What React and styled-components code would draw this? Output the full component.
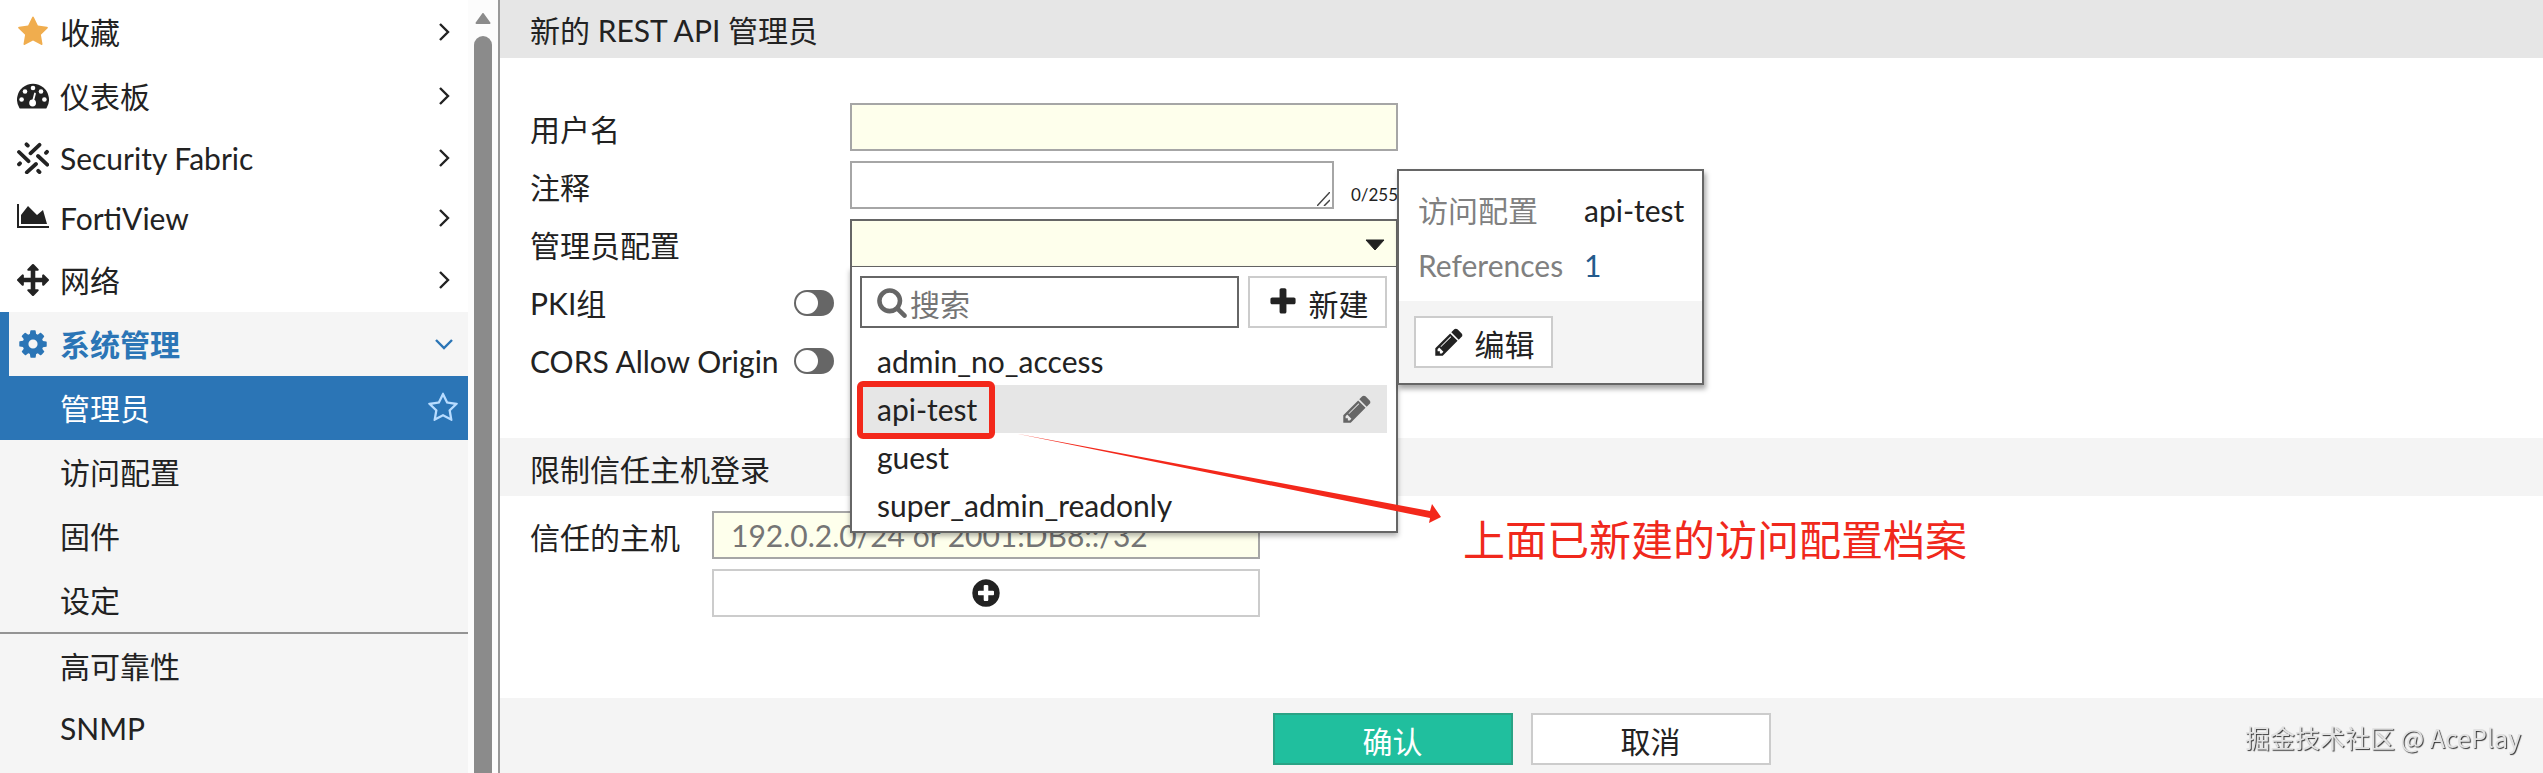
import React from "react";
import styled, { createGlobalStyle, css } from "styled-components";

const GlobalStyle = createGlobalStyle`
  *, *::before, *::after { box-sizing: border-box; }
  body {
    margin: 0;
    background: #fff;
    color: #222;
    font: 30px/40px Lato, "Noto Sans CJK SC", sans-serif;
  }
  button, input, select, textarea { font: inherit; color: inherit; margin: 0; }
  a { color: inherit; text-decoration: none; }
  ul { list-style: none; margin: 0; padding: 0; }
  svg { display: block; flex: none; }
`;

/* ---------- icons ---------- */

const Glyph = ({ d, size = 32, box = "0 0 1792 1792" }) => (
  <svg width={size} height={size} viewBox={box} fill="currentColor" aria-hidden="true">
    <path d={d} />
  </svg>
);

const STAR =
  "M1728 647q0 22-26 48l-363 354 86 500q1 7 1 20 0 21-10.5 35.5t-30.5 14.5q-19 0-40-12l-449-236-449 236q-22 12-40 12-21 0-31.5-14.5t-10.5-35.5q0-6 2-20l86-500-364-354q-25-27-25-48 0-37 56-46l502-73 225-455q19-41 49-41t49 41l225 455 502 73q56 9 56 46z";
const STAR_OUTLINE =
  "M1201 1004l306-297-422-62-189-382-189 382-422 62 306 297-73 421 378-199 377 199zm527-357q0 22-26 48l-363 354 86 500q1 7 1 20 0 50-41 50-19 0-40-12l-449-236-449 236q-22 12-40 12-21 0-31.5-14.5t-10.5-35.5q0-6 2-20l86-500-364-354q-25-27-25-48 0-37 56-46l502-73 225-455q19-41 49-41t49 41l225 455 502 73q56 9 56 46z";
const GEAR =
  "M1152 896q0-106-75-181t-181-75-181 75-75 181 75 181 181 75 181-75 75-181zm512-109v222q0 12-8 23t-20 13l-185 28q-19 54-39 91 35 50 107 138 10 12 10 25t-9 23q-27 37-99 108t-94 71q-12 0-26-9l-138-108q-44 23-91 38-16 136-29 186-7 28-36 28h-222q-14 0-24.5-8.5t-11.5-21.5l-28-184q-49-16-90-37l-141 107q-10 9-25 9-14 0-25-11-126-114-165-168-7-10-7-23 0-12 8-23 15-21 51-66.5t54-70.5q-27-50-41-99l-183-27q-13-2-21-12.5t-8-23.5v-222q0-12 8-23t19-13l186-28q14-46 39-92-40-57-107-138-10-12-10-24 0-10 9-23 26-36 98.5-107.5t94.5-71.5q13 0 26 10l138 107q44-23 91-38 16-136 29-186 7-28 36-28h222q14 0 24.5 8.5t11.5 21.5l28 184q49 16 90 37l142-107q9-9 24-9 13 0 25 10 129 119 165 170 7 8 7 22 0 12-8 23-15 21-51 66.5t-54 70.5q26 50 41 98l183 28q13 2 21 12.5t8 23.5z";
const ARROWS =
  "M1792 896q0 26-19 45l-256 256q-19 19-45 19t-45-19-19-45v-128h-384v384h128q26 0 45 19t19 45-19 45l-256 256q-19 19-45 19t-45-19l-256-256q-19-19-19-45t19-45 45-19h128v-384h-384v128q0 26-19 45t-45 19-45-19l-256-256q-19-19-19-45t19-45l256-256q19-19 45-19t45 19 19 45v128h384v-384h-128q-26 0-45-19t-19-45 19-45l256-256q19-19 45-19t45 19l256 256q19 19 19 45t-19 45-45 19h-128v384h384v-128q0-26 19-45t45-19 45 19l256 256q19 19 19 45z";
const AREA = "M2048 1536v128h-2048v-1536h128v1408h1920zm-384-1024l256 896h-1664v-576l448-576 576 576z";
const PENCIL =
  "M491 1536l91-91-235-235-91 91v107h128v128h107zm523-928q0-22-22-22-10 0-17 7l-542 542q-7 7-7 17 0 22 22 22 10 0 17-7l542-542q7-7 7-17zm-54-192l416 416-832 832h-416v-416zm683 96q0 53-37 90l-166 166-416-416 166-165q36-38 90-38 53 0 91 38l235 234q37 39 37 91z";
const SEARCH =
  "M1216 832q0-185-131.5-316.5t-316.5-131.5-316.5 131.5-131.5 316.5 131.5 316.5 316.5 131.5 316.5-131.5 131.5-316.5zm512 832q0 52-38 90t-90 38q-54 0-90-38l-343-342q-179 124-399 124-143 0-273.5-55.5t-225-150-150-225-55.5-273.5 55.5-273.5 150-225 225-150 273.5-55.5 273.5 55.5 225 150 150 225 55.5 273.5q0 220-124 399l343 343q37 37 37 90z";
const PLUS =
  "M1600 736v192q0 40-28 68t-68 28h-416v416q0 40-28 68t-68 28h-192q-40 0-68-28t-28-68v-416h-416q-40 0-68-28t-28-68v-192q0-40 28-68t68-28h416v-416q0-40 28-68t68-28h192q40 0 68 28t28 68v416h416q40 0 68 28t28 68z";
const PLUS_CIRCLE =
  "M1344 960v-128q0-26-19-45t-45-19h-256v-256q0-26-19-45t-45-19h-128q-26 0-45 19t-19 45v256h-256q-26 0-45 19t-19 45v128q0 26 19 45t45 19h256v256q0 26 19 45t45 19h128q26 0 45-19t19-45v-256h256q26 0 45-19t19-45zm320-64q0 209-103 385.5t-279.5 279.5-385.5 103-385.5-103-279.5-279.5-103-385.5 103-385.5 279.5-279.5 385.5-103 385.5 103 279.5 279.5 103 385.5z";

const DashboardIcon = () => (
  <svg width="32" height="32" viewBox="0 0 32 32" aria-hidden="true">
    <path d="M3.4 28.6a1.2 1.2 0 0 1-1-.5A16 16 0 1 1 29.600 28.100a1.200 1.200 0 0 1-1 .5z" fill="currentColor" />
    <g fill="#fff">
      <circle cx="4.600" cy="19.500" r="2.300" />
      <circle cx="8" cy="11.500" r="2.300" />
      <circle cx="16" cy="8" r="2.300" />
      <circle cx="24" cy="11.500" r="2.300" />
      <circle cx="27.400" cy="19.500" r="2.300" />
      <circle cx="15.600" cy="23" r="3.400" />
    </g>
    <path d="M15.800 22L18 13.500" stroke="#fff" strokeWidth="1.800" strokeLinecap="round" />
  </svg>
);

const FabricIcon = () => (
  <svg width="32" height="32" viewBox="0 0 32 32" fill="none" stroke="currentColor" strokeWidth="3.800" strokeLinecap="round" aria-hidden="true">
    <path d="M9.500 2.300l1.300 1.300M22.500 2.800l-9 8.500M2 10l9.500 9.200M30 9.800l-1 1M21 14l9.200 8.700M19 22l-9.200 8.300M3 21.300l-1 1M21.200 28.800l1.300 1.300" />
  </svg>
);

const Chevron = ({ down }) => (
  <svg width="20" height="20" viewBox="0 0 20 20" fill="none" stroke="currentColor" strokeWidth="2.400" aria-hidden="true">
    <path d={down ? "M2 6l8 8 8-8" : "M6 2l8 8-8 8"} />
  </svg>
);

/* ---------- shell ---------- */

const Page = styled.div`
  display: flex;
  height: 100vh;
  min-height: 700px;
  overflow: hidden;
`;

const Sidebar = styled.aside`
  display: flex;
  flex: none;
  width: 500px;
  border-right: 2px solid #999;
`;

const Menu = styled.nav`
  display: flex;
  flex-direction: column;
  width: 468px;
`;

const MenuRow = styled.a`
  display: flex;
  flex: none;
  align-items: center;
  height: ${(p) => (p.$compact ? 60 : 64)}px;
  padding: 0 14px 0 17px;
  gap: 11px;

  span { flex: 1; }

  ${(p) =>
    p.$open &&
    css`
      padding-left: 8px;
      border-left: 9px solid #2b75b6;
      background: #f5f5f5;
      color: #2b75b6;
      font-weight: 700;
    `}
`;

const StarTint = styled.i`
  color: #f0ad4e;
`;

const SubMenu = styled.div`
  display: flex;
  flex: 1;
  flex-direction: column;
  background: #f5f5f5;
`;

const SubRow = styled(MenuRow)`
  padding: 0 9px 0 60px;
  ${(p) =>
    p.$selected &&
    css`
      background: #2b75b6;
      color: #fff;
      svg { color: #b8dcff; }
    `}
`;

const Divider = styled.hr`
  flex: none;
  width: 100%;
  margin: 0;
  border: 0;
  border-top: 2px solid #949494;
`;

const ScrollTrack = styled.div`
  display: flex;
  flex: 1;
  flex-direction: column;
  align-items: center;
  padding-top: 13px;
  gap: 12px;
  background: #fcfcfc;
`;

const ScrollThumb = styled.div`
  flex: 1;
  width: 18px;
  border-radius: 9px 9px 0 0;
  background: #8b8b8b;
`;

const Main = styled.main`
  display: flex;
  flex: 1;
  flex-direction: column;
  min-width: 0;
`;

const TitleBar = styled.h1`
  height: 58px;
  margin: 0;
  padding: 10px 30px;
  background: #e6e6e6;
  font: inherit;
`;

const Form = styled.form`
  display: flex;
  flex: 1;
  flex-direction: column;
`;

const Fields = styled.div`
  display: flex;
  flex-direction: column;
  gap: 10px;
  padding: ${(p) => (p.$top ? "45px 30px 55px" : "15px 30px")};
`;

const Field = styled.div`
  display: grid;
  grid-template-columns: ${(p) => (p.$narrow ? "182px" : "320px")} 548px;
  align-items: center;
  min-height: 48px;
`;

const FieldLabel = styled.div`
  display: flex;
  align-items: center;
  justify-content: space-between;
  padding: 4px 16px 0 0;
`;

const boxed = css`
  width: 100%;
  height: 48px;
  border: 2px solid #a6a6a6;
  border-radius: 0;
  background: ${(p) => (p.$required ? "#feffec" : "#fff")};
  outline: none;
`;

const TextInput = styled.input`
  ${boxed}
  padding: 0 17px;
  &::placeholder { color: #757575; opacity: 1; }
`;

const CommentBox = styled.div`
  display: flex;
  align-items: flex-end;
  justify-content: space-between;
`;

const Resizable = styled.div`
  position: relative;
  width: 484px;
  height: 48px;
  svg {
    position: absolute;
    right: 4px;
    bottom: 3px;
  }
`;

const TextArea = styled.textarea`
  ${boxed}
  display: block;
  resize: none;
`;

const Counter = styled.span`
  font-size: 17px;
  line-height: 28px;
`;

const Toggle = styled.input.attrs({ type: "checkbox" })`
  appearance: none;
  width: 40px;
  height: 26px;
  padding: 2px;
  border-radius: 13px;
  background: #666;
  &::before {
    content: "";
    display: block;
    width: 22px;
    height: 22px;
    border-radius: 50%;
    background: #fff;
  }
  &:checked::before { margin-left: auto; }
`;

const SectionTitle = styled.h2`
  height: 58px;
  margin: 0;
  padding: 11px 30px 7px;
  background: #f4f4f4;
  font: inherit;
`;

const Button = styled.button`
  display: flex;
  flex: none;
  align-items: center;
  justify-content: center;
  gap: 10px;
  width: ${(p) => p.$width || "100%"};
  height: ${(p) => p.$height || 52}px;
  padding: 0;
  border: 2px solid #ccc;
  background: #fff;
  white-space: nowrap;
  ${(p) =>
    p.$primary &&
    css`
      border-color: #2aa385;
      background: #20bf9e;
      color: #fff;
    `}
  span { padding-top: 3px; }
`;

const Footer = styled.footer`
  display: flex;
  justify-content: center;
  gap: 18px;
  margin-top: auto;
  padding: 15px 0 8px;
  background: #f4f4f4;
`;

/* ---------- profile drop-down ---------- */

const Combo = styled.div`
  position: relative;
  z-index: 1;
  height: 48px;
`;

const ProfileSelect = styled.select`
  ${boxed}
  appearance: none;
  border: 2px solid #666;
  border-bottom-width: 1px;
`;

const Caret = styled.svg`
  position: absolute;
  top: 20px;
  right: 13px;
  pointer-events: none;
`;

const Panel = styled.div`
  position: absolute;
  top: 48px;
  left: 0;
  width: 100%;
  padding: 9px 9px 2px 8px;
  border: 2px solid #666;
  border-top: 0;
  background: #fff;
  box-shadow: 0 3px 5px rgba(0, 0, 0, 0.3);
`;

const Tools = styled.div`
  display: flex;
  gap: 9px;
  margin-bottom: 9px;
`;

const SearchBox = styled.label`
  display: flex;
  flex: 1;
  min-width: 0;
  align-items: center;
  gap: 2px;
  height: 52px;
  padding-left: 14px;
  border: 2px solid #666;
  color: #666;
  input {
    flex: 1;
    min-width: 0;
    height: 44px;
    padding: 4px 0 0;
    border: 0;
    outline: 0;
    background: transparent;
  }
  input::placeholder { color: #757575; opacity: 1; }
`;

const Option = styled.li`
  position: relative;
  display: flex;
  align-items: center;
  justify-content: space-between;
  height: 48px;
  padding: 0 14px 0 17px;
  background: ${(p) => (p.$active ? "#e6e6e6" : "transparent")};
  svg { color: #666; }
`;

const RedFrame = styled.span`
  position: absolute;
  top: -4px;
  left: -3px;
  width: 138px;
  height: 58px;
  border: 6px solid #f3281b;
  border-radius: 6px;
`;

const Popover = styled.div`
  position: absolute;
  top: -50px;
  left: 547px;
  width: 307px;
  border: 2px solid #666;
  background: #fff;
  box-shadow: 2px 4px 5px rgba(0, 0, 0, 0.35);
`;

const Facts = styled.dl`
  display: grid;
  grid-template-columns: 166px auto;
  row-gap: 15px;
  margin: 0;
  padding: 19px 0 16px 19px;
  dt { color: #808080; }
  dd { margin: 0; }
  a { color: #235a8c; }
`;

const PopoverActions = styled.div`
  padding: 15px;
  background: #f4f4f4;
`;

const Pointer = styled.svg`
  position: absolute;
  top: 212px;
  left: 162px;
  pointer-events: none;
`;

const Note = styled.p`
  position: absolute;
  top: 291px;
  left: 613px;
  margin: 0;
  color: #f0281c;
  font-size: 42px;
  line-height: 60px;
  white-space: nowrap;
`;

const Watermark = styled.div`
  position: fixed;
  right: 22px;
  bottom: 16px;
  color: #e2e2e2;
  font: 25px/40px "Noto Sans CJK SC", sans-serif;
  text-shadow: 1px 1px 1px #333;
`;

const sections = [
  { text: "收藏", icon: <StarTint><Glyph d={STAR} /></StarTint> },
  { text: "仪表板", icon: <DashboardIcon /> },
  { text: "Security Fabric", icon: <FabricIcon />, compact: true },
  { text: "FortiView", icon: <Glyph d={AREA} box="0 0 2048 2048" />, compact: true },
  { text: "网络", icon: <Glyph d={ARROWS} /> },
  { text: "系统管理", icon: <Glyph d={GEAR} />, open: true },
];

const profiles = ["admin_no_access", "api-test", "guest", "super_admin_readonly"];

function ProfilePicker() {
  return (
    <Combo>
      <ProfileSelect id="profile" $required defaultValue="">
        <option value="" />
        {profiles.map((name) => <option key={name}>{name}</option>)}
      </ProfileSelect>
      <Caret width="20" height="12" viewBox="0 0 20 12" aria-hidden="true">
        <path d="M1 1h18l-9 10z" fill="#222" stroke="#222" strokeLinejoin="round" />
      </Caret>
      <Panel>
        <Tools>
          <SearchBox>
            <Glyph d={SEARCH} />
            <input type="text" placeholder="搜索" aria-label="搜索" />
          </SearchBox>
          <Button type="button" $width="139px">
            <Glyph d={PLUS} />
            <span>新建</span>
          </Button>
        </Tools>
        <ul>
          {profiles.map((name) => {
            const active = name === "api-test";
            return (
              <Option key={name} $active={active}>
                {name}
                {active && <Glyph d={PENCIL} />}
                {active && <RedFrame />}
              </Option>
            );
          })}
        </ul>
      </Panel>
      <Popover>
        <Facts>
          <dt>访问配置</dt>
          <dd>api-test</dd>
          <dt>References</dt>
          <dd><a href="#references">1</a></dd>
        </Facts>
        <PopoverActions>
          <Button type="button" $width="139px">
            <Glyph d={PENCIL} />
            <span>编辑</span>
          </Button>
        </PopoverActions>
      </Popover>
      <Pointer width="432" height="94" viewBox="0 0 432 94" aria-hidden="true">
        <path d="M2 2L418 80L420 73L429 86L417 92L418 87Z" fill="#f3281b" />
      </Pointer>
      <Note>上面已新建的访问配置档案</Note>
    </Combo>
  );
}

export default function App() {
  return (
    <>
      <GlobalStyle />
      <Page>
        <Sidebar>
          <Menu>
            {sections.map((s) => (
              <MenuRow key={s.text} href="#menu" $compact={s.compact} $open={s.open}>
                {s.icon}
                <span>{s.text}</span>
                <Chevron down={s.open} />
              </MenuRow>
            ))}
            <SubMenu>
              <SubRow href="#admins" $selected>
                <span>管理员</span>
                <Glyph d={STAR_OUTLINE} />
              </SubRow>
              <SubRow href="#profiles"><span>访问配置</span></SubRow>
              <SubRow href="#firmware"><span>固件</span></SubRow>
              <SubRow href="#settings"><span>设定</span></SubRow>
              <Divider />
              <SubRow href="#ha"><span>高可靠性</span></SubRow>
              <SubRow href="#snmp" $compact><span>SNMP</span></SubRow>
            </SubMenu>
          </Menu>
          <ScrollTrack>
            <svg width="16" height="11" viewBox="0 0 16 11" aria-hidden="true">
              <path d="M8 1l6.500 9h-13z" fill="#8b8b8b" stroke="#8b8b8b" strokeWidth="2" strokeLinejoin="round" />
            </svg>
            <ScrollThumb />
          </ScrollTrack>
        </Sidebar>
        <Main>
          <TitleBar>新的 REST API 管理员</TitleBar>
          <Form>
            <Fields $top>
              <Field>
                <FieldLabel><label htmlFor="username">用户名</label></FieldLabel>
                <TextInput id="username" $required />
              </Field>
              <Field>
                <FieldLabel><label htmlFor="comment">注释</label></FieldLabel>
                <CommentBox>
                  <Resizable>
                    <TextArea id="comment" />
                    <svg width="13" height="14" viewBox="0 0 13 14" fill="none" stroke="#444" strokeWidth="1.500" aria-hidden="true">
                      <path d="M0 14L13 0M7 14l6-6" />
                    </svg>
                  </Resizable>
                  <Counter>0/255</Counter>
                </CommentBox>
              </Field>
              <Field>
                <FieldLabel><label htmlFor="profile">管理员配置</label></FieldLabel>
                <ProfilePicker />
              </Field>
              <Field>
                <FieldLabel>
                  <label htmlFor="pki">PKI组</label>
                  <Toggle id="pki" />
                </FieldLabel>
              </Field>
              <Field>
                <FieldLabel>
                  <label htmlFor="cors">CORS Allow Origin</label>
                  <Toggle id="cors" />
                </FieldLabel>
              </Field>
            </Fields>
            <SectionTitle>限制信任主机登录</SectionTitle>
            <Fields>
              <Field $narrow>
                <FieldLabel><label htmlFor="host">信任的主机</label></FieldLabel>
                <TextInput id="host" $required placeholder="192.0.2.0/24 or 2001:DB8::/32" />
              </Field>
              <Field $narrow>
                <span />
                <Button type="button" $height={48} aria-label="添加">
                  <Glyph d={PLUS_CIRCLE} />
                </Button>
              </Field>
            </Fields>
            <Footer>
              <Button type="submit" $primary $width="240px"><span>确认</span></Button>
              <Button type="button" $width="240px"><span>取消</span></Button>
            </Footer>
          </Form>
        </Main>
        <Watermark>掘金技术社区 @ AcePlay</Watermark>
      </Page>
    </>
  );
}
